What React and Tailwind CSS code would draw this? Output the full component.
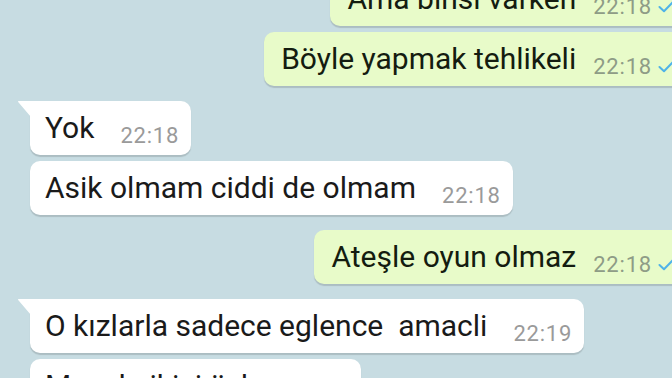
const messages = [
  { id: 1, out: true, text: "Ama binsi varken", time: "22:18" },
  { id: 2, out: true, text: "Böyle yapmak tehlikeli", time: "22:18" },
  { id: 3, out: false, tail: true, text: "Yok", time: "22:18" },
  { id: 4, out: false, text: "Asik olmam ciddi de olmam", time: "22:18" },
  { id: 5, out: true, tail: true, text: "Ateşle oyun olmaz", time: "22:18" },
  { id: 6, out: false, tail: true, text: "O kızlarla sadece eglence\u00a0 amacli", time: "22:19" },
  { id: 7, out: false, text: "Mesela ikisi öyle", time: "22:19" },
];

function Check() {
  return (
    <svg width="17" height="13" viewBox="0 0 17 13" className="ml-[6px] mb-[3px] shrink-0">
      <path d="M1.5 7 L6 11.2 L15.5 1.5" fill="none" stroke="#4fb3e8" strokeWidth="2" strokeLinecap="round" strokeLinejoin="round" />
    </svg>
  );
}

function Bubble({ msg, first }) {
  const side = msg.out ? "justify-end -mr-[13px]" : "justify-start pl-[30px]";
  const gap = first ? "-mt-[28px]" : msg.tail ? "mt-[15px]" : "mt-[6px]";

  return (
    <div className={`relative flex ${side} ${gap}`}>
      <div
        className={`relative flex items-end rounded-[10px] pt-[10px] pb-[10px] shadow-[0_1.5px_1px_rgba(0,0,0,0.14)] ${
          msg.out ? "bg-[#e8fbc9] pl-[17px] pr-[10px]" : "bg-white pl-[15px] pr-[12px]"
        } ${!msg.out && msg.tail ? "rounded-tl-none" : ""}`}
      >
        {!msg.out && msg.tail && (
          <svg width="13" height="16" viewBox="0 0 13 16" className="absolute -left-[12px] top-0">
            <path d="M13 0 L0.5 0 Q-0.5 0.3 0.6 1.4 L13 16 Z" fill="#ffffff" />
          </svg>
        )}
        <span className={`text-[30px] leading-[34px] whitespace-pre ${msg.out ? "text-[#141c10]" : "text-[#1a1a1a]"}`}>
          {msg.text}
        </span>
        <span
          className={`mb-[-3px] text-[22px] leading-[24px] tracking-[0.8px] ${
            msg.out ? "ml-[17px] text-[#8e9c86]" : "ml-[26px] text-[#9a9a9a]"
          }`}
        >
          {msg.time}
        </span>
        {msg.out && <Check />}
      </div>
    </div>
  );
}

export default function App() {
  return (
    <div
      className="h-[378px] w-[672px] overflow-hidden bg-[#c7dce2]"
      style={{ fontFamily: "Roboto, 'Noto Sans', sans-serif" }}
    >
      <div className="flex flex-col">
        {messages.map((m, i) => (
          <Bubble key={m.id} msg={m} first={i === 0} />
        ))}
      </div>
    </div>
  );
}
